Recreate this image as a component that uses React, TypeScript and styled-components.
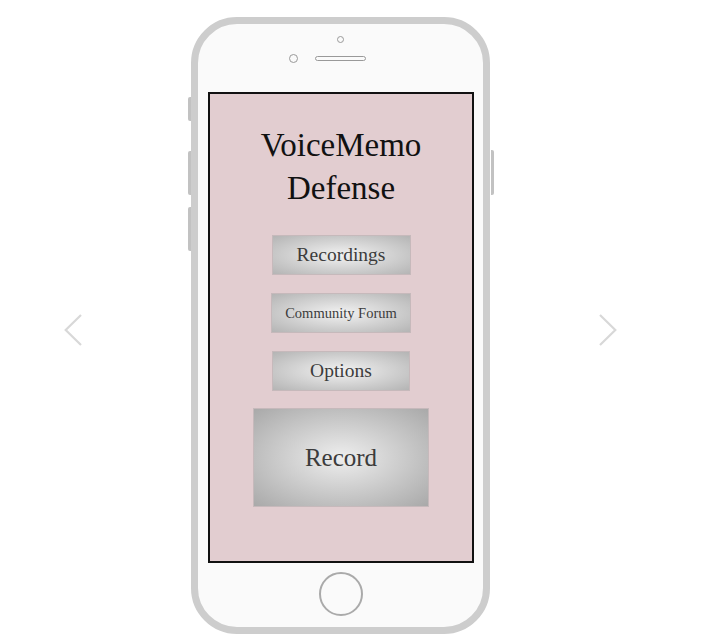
import React from "react";
import styled, { createGlobalStyle } from "styled-components";

const GlobalStyle = createGlobalStyle`
  html, body {
    margin: 0;
    padding: 0;
    background: #fff;
  }
  body {
    font-family: "Liberation Serif", "Times New Roman", serif;
  }
`;

const Stage = styled.div`
  display: flex;
  align-items: flex-start;
  padding: 17px 0 0 64px;
  height: 643px;
  box-sizing: border-box;
`;

const Arrow = styled.button`
  display: flex;
  margin: 297px 0 0 ${(p: { $gap?: number }) => p.$gap || 0}px;
  padding: 0;
  border: none;
  background: none;
  cursor: pointer;
`;

const Phone = styled.div`
  position: relative;
  margin-left: 109px;
  width: 299px;
  height: 617px;
  box-sizing: border-box;
  border: 7px solid #cdcdcd;
  border-radius: 46px;
  background: #fafafa;
  display: flex;
  flex-direction: column;
  align-items: center;
`;

const SideKey = styled.span<{ $top: number; $height: number; $right?: boolean }>`
  position: absolute;
  top: ${(p) => p.$top}px;
  ${(p) => (p.$right ? "right: -11px;" : "left: -10px;")}
  width: 3px;
  height: ${(p) => p.$height}px;
  background: #c2c2c2;
  border-radius: ${(p) => (p.$right ? "0 2px 2px 0" : "2px 0 0 2px")};
`;

const Earpiece = styled.span`
  margin-top: 12px;
  width: 7px;
  height: 7px;
  box-sizing: border-box;
  border: 1px solid #999;
  border-radius: 50%;
`;

const SpeakerRow = styled.div`
  display: grid;
  grid-template-columns: 1fr auto 1fr;
  align-items: center;
  width: 100%;
  margin-top: 11px;
`;

const Camera = styled.span`
  justify-self: end;
  margin-right: 17px;
  width: 9px;
  height: 9px;
  box-sizing: border-box;
  border: 1px solid #999;
  border-radius: 50%;
`;

const Speaker = styled.span`
  width: 51px;
  height: 5px;
  box-sizing: border-box;
  border: 1px solid #999;
  border-radius: 3px;
`;

const Screen = styled.main`
  margin-top: 29px;
  margin-left: 1px;
  width: 266px;
  height: 471px;
  box-sizing: border-box;
  border: 2px solid #111;
  background: #e2cdd0;
  display: flex;
  flex-direction: column;
  align-items: center;
`;

const Title = styled.h1`
  margin: 30px 0 0;
  font-size: 33px;
  font-weight: normal;
  line-height: 43px;
  text-align: center;
  color: #111;
`;

const Menu = styled.nav`
  display: flex;
  flex-direction: column;
  align-items: center;
  gap: 18px;
  margin-top: 25px;
`;

const MenuButton = styled.button<{ $width: number; $size: number }>`
  display: flex;
  align-items: center;
  justify-content: center;
  width: ${(p) => p.$width}px;
  height: 40px;
  padding: 0;
  border: 1px solid #c6b9bb;
  background: radial-gradient(ellipse at center, #f2f2f2 0%, #b4b4b4 100%);
  font-family: "Liberation Serif", "Times New Roman", serif;
  font-size: ${(p) => p.$size}px;
  color: #3c3c3c;
  cursor: pointer;
`;

const RecordButton = styled(MenuButton)`
  margin-top: -1px;
  height: 99px;
  background: radial-gradient(ellipse at center, #eeeeee 0%, #a9a9a9 100%);
`;

const HomeButton = styled.button`
  margin-top: 9px;
  width: 44px;
  height: 44px;
  padding: 0;
  box-sizing: border-box;
  border: 2px solid #aaa;
  border-radius: 50%;
  background: transparent;
  cursor: pointer;
`;

const Chevron = ({ dir }: { dir: "left" | "right" }) => (
  <svg width="18" height="32" viewBox="0 0 18 32">
    <polyline
      points={dir === "left" ? "17,1 1.7,16 17,31" : "1,1 16.3,16 1,31"}
      fill="none"
      stroke="#d8d8d8"
      strokeWidth="2.2"
    />
  </svg>
);

export default function App() {
  return (
    <>
      <GlobalStyle />
      <Stage>
        <Arrow aria-label="previous">
          <Chevron dir="left" />
        </Arrow>
        <Phone>
          <SideKey $top={73} $height={24} />
          <SideKey $top={127} $height={44} />
          <SideKey $top={183} $height={44} />
          <SideKey $right $top={126} $height={45} />
          <Earpiece />
          <SpeakerRow>
            <Camera />
            <Speaker />
            <span />
          </SpeakerRow>
          <Screen>
            <Title>
              VoiceMemo
              <br />
              Defense
            </Title>
            <Menu>
              <MenuButton $width={139} $size={19.5}>Recordings</MenuButton>
              <MenuButton $width={140} $size={14.5}>Community Forum</MenuButton>
              <MenuButton $width={138} $size={19.5}>Options</MenuButton>
              <RecordButton $width={176} $size={25}>Record</RecordButton>
            </Menu>
          </Screen>
          <HomeButton aria-label="home" />
        </Phone>
        <Arrow aria-label="next" $gap={109}>
          <Chevron dir="right" />
        </Arrow>
      </Stage>
    </>
  );
}
